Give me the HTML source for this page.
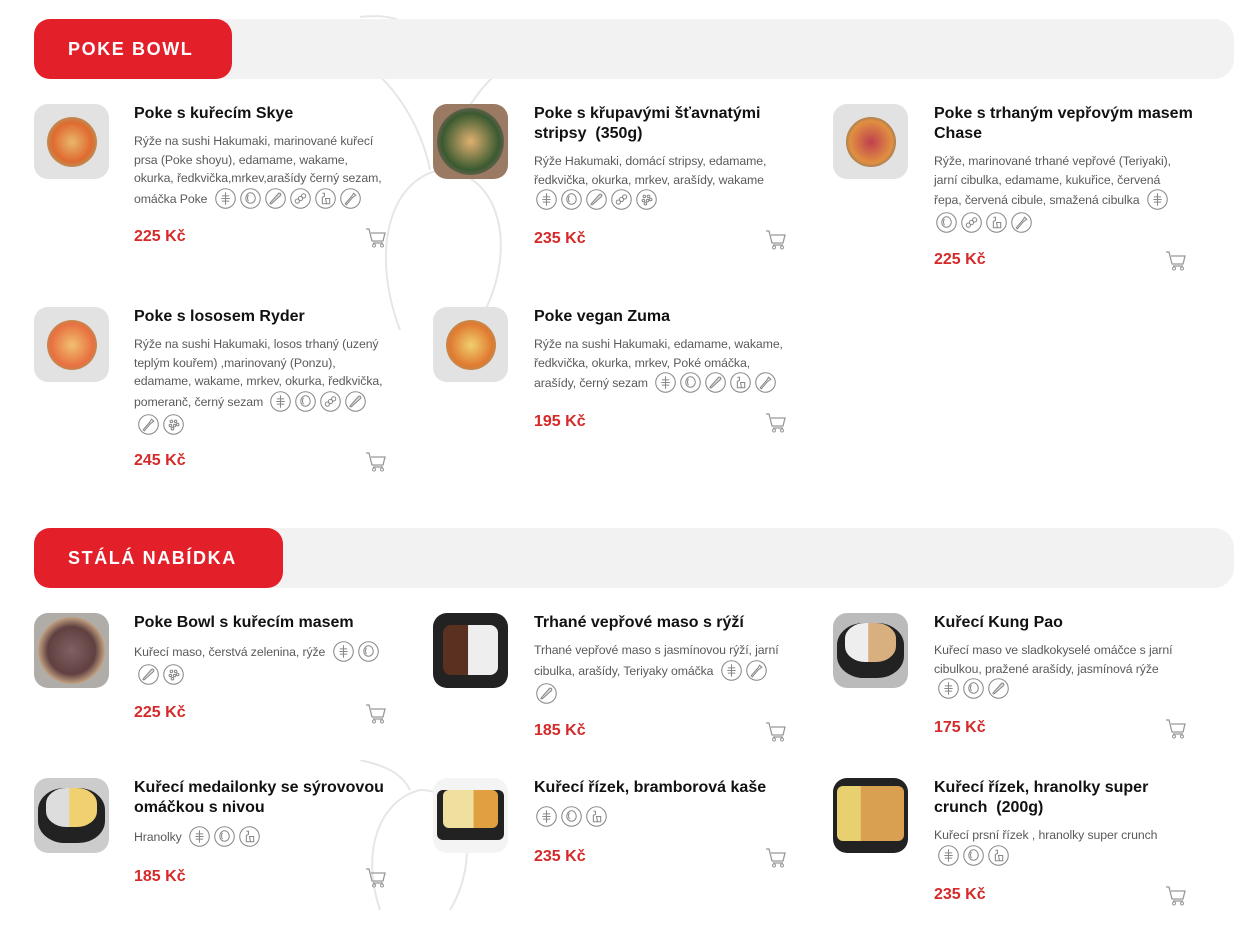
<!DOCTYPE html><html><head><meta charset="utf-8"><style>
body{margin:0;width:1259px;height:942px;background:#fff;font-family:"Liberation Sans",Arial,sans-serif;position:relative;overflow:hidden}
.bar{position:absolute;left:34px;width:1200px;height:60px;background:#f2f2f2;border-radius:20px}
.pill{position:absolute;left:0;top:0;height:60px;background:#e3202a;border-radius:16px;color:#fff;font-weight:bold;font-size:18px;letter-spacing:1.6px;line-height:60px;padding-left:34px;box-sizing:border-box}
.img{position:absolute;width:75px;height:75px;border-radius:14px;overflow:hidden;background:#e2e2e2}
.it{position:absolute;width:262px}
.t{font-weight:bold;font-size:16px;line-height:20px;color:#111;margin:0 0 8px;white-space:nowrap}
.d{font-size:12.3px;letter-spacing:-0.1px;line-height:18.5px;color:#5a5a5a;white-space:nowrap}
.i{display:inline-block;width:21px;height:21px;vertical-align:middle;margin:0 0 2px 4px}
.p{position:absolute;font-weight:bold;font-size:16px;color:#d42a2a}
.c{position:absolute;width:22px;height:20px}
</style></head><body>
<svg width="0" height="0" style="position:absolute"><defs>
<symbol id="cart" viewBox="0 0 22 20"><path d="M1 1h3l3 12h11l2-8H6M8 15h10" stroke="#999" stroke-width="1.3" fill="none"/><circle cx="9" cy="17.5" r="1.5" stroke="#999" fill="none"/><circle cx="17" cy="17.5" r="1.5" stroke="#999" fill="none"/></symbol>
<symbol id="a" viewBox="0 0 20 20"><circle cx="10" cy="10" r="9.3" stroke="#888" stroke-width="1" fill="none"/><path d="M10 4v12M6.5 7.5h7M6 10h8M6.5 12.5h7" stroke="#888" stroke-width="1" fill="none"/></symbol>
<symbol id="b" viewBox="0 0 20 20"><circle cx="10" cy="10" r="9.3" stroke="#888" stroke-width="1" fill="none"/><path d="M10 4.5c3 0 4.5 3 4.5 5.5s-2 4.5-4.5 4.5-4.5-2-4.5-4.5S7 4.5 10 4.5zM8 6.5c-1 1.5-1 4 0 6" stroke="#888" stroke-width="1" fill="none"/></symbol>
<symbol id="c" viewBox="0 0 20 20"><circle cx="10" cy="10" r="9.3" stroke="#888" stroke-width="1" fill="none"/><path d="M5 14l8-9c1.5-.5 2.5.5 2 2l-9 8c-1.5.5-1.5-.5-1-1z" stroke="#888" stroke-width="1" fill="#ddd"/></symbol>
<symbol id="e" viewBox="0 0 20 20"><circle cx="10" cy="10" r="9.3" stroke="#888" stroke-width="1" fill="none"/><circle cx="7" cy="12.5" r="2" stroke="#888" fill="none"/><circle cx="10" cy="10" r="2" stroke="#888" fill="none"/><circle cx="13" cy="7.5" r="2" stroke="#888" fill="none"/></symbol>
<symbol id="f" viewBox="0 0 20 20"><circle cx="10" cy="10" r="9.3" stroke="#888" stroke-width="1" fill="none"/><path d="M7 5h2v3l-2 1v6h4M10 10h4v5h-3z" stroke="#888" stroke-width="1" fill="none"/></symbol>
<symbol id="g" viewBox="0 0 20 20"><circle cx="10" cy="10" r="9.3" stroke="#888" stroke-width="1" fill="none"/><path d="M5 15l6-7 2-3 2 2-3 2-6 7z" stroke="#888" stroke-width="1" fill="none"/></symbol>
<symbol id="h" viewBox="0 0 20 20"><circle cx="10" cy="10" r="9.3" stroke="#888" stroke-width="1" fill="none"/><g fill="none" stroke="#888"><circle cx="8" cy="7" r="1.2"/><circle cx="12" cy="7" r="1.2"/><circle cx="7" cy="11" r="1.2"/><circle cx="11" cy="11" r="1.2"/><circle cx="14" cy="10" r="1.2"/><circle cx="9" cy="14" r="1.2"/></g></symbol>
</defs></svg>

<svg style="position:absolute;left:360px;top:0" width="180" height="340" opacity=".2"><path d="M40 330 C10 250 30 180 80 170 C140 170 160 250 120 320 M70 170 C60 120 30 80 0 60 M80 170 C100 110 130 70 160 60 M-20 20 C30 10 50 20 60 40" stroke="#888" stroke-width="2" fill="none"/></svg>
<svg style="position:absolute;left:360px;top:760px" width="120" height="160" opacity=".2"><path d="M20 150 C0 90 20 40 60 30 C110 30 120 100 90 150 M50 30 C40 10 20 5 0 0" stroke="#888" stroke-width="2" fill="none"/></svg>

<div class="bar" style="top:19px"><div class="pill" style="width:198px">POKE BOWL</div></div>
<div class="bar" style="top:528px"><div class="pill" style="width:249px">STÁLÁ NABÍDKA</div></div>

<div class="img" style="left:34px;top:104px"><div style="margin:13px;width:50px;height:50px;border-radius:50%;background:radial-gradient(#e8b86b,#e06a30 55%,#c08a50 70%)"></div></div>
<div class="img" style="left:433px;top:104px;background:#9a7a62"><div style="margin:4px;width:67px;height:67px;border-radius:50%;background:radial-gradient(#e0b070,#3a5a30 60%,#c07090)"></div></div>
<div class="img" style="left:833px;top:104px"><div style="margin:13px;width:50px;height:50px;border-radius:50%;background:radial-gradient(#c04050,#e09040 60%,#b08050 70%)"></div></div>
<div class="img" style="left:34px;top:307px"><div style="margin:13px;width:50px;height:50px;border-radius:50%;background:radial-gradient(#f0c070,#e87040 60%,#c08a50 72%)"></div></div>
<div class="img" style="left:433px;top:307px"><div style="margin:13px;width:50px;height:50px;border-radius:50%;background:radial-gradient(#f0d070,#e07a30 60%,#c08a50 72%)"></div></div>
<div class="img" style="left:34px;top:613px;background:#b0aca8"><div style="margin:4px;width:67px;height:67px;border-radius:50%;background:radial-gradient(#806060,#604040 50%,#c0a080 70%)"></div></div>
<div class="img" style="left:433px;top:613px;background:#222"><div style="margin:12px 10px;width:55px;height:50px;border-radius:8px;background:linear-gradient(90deg,#5a3020 45%,#eee 46%)"></div></div>
<div class="img" style="left:833px;top:613px;background:#bbb"><div style="margin:10px 4px;width:67px;height:55px;border-radius:40%;background:#222"><div style="margin:8px;width:51px;height:39px;border-radius:40%;background:linear-gradient(90deg,#eee 45%,#d8b080 46%)"></div></div></div>
<div class="img" style="left:34px;top:778px;background:#ccc"><div style="margin:10px 4px;width:67px;height:55px;border-radius:40%;background:#222"><div style="margin:8px;width:51px;height:39px;border-radius:40%;background:linear-gradient(90deg,#ddd 45%,#f0d070 46%)"></div></div></div>
<div class="img" style="left:433px;top:778px;background:#f4f4f4"><div style="margin:12px 4px;width:67px;height:50px;border-radius:6px;background:#222"><div style="margin:6px;width:55px;height:38px;border-radius:6px;background:linear-gradient(90deg,#f0e0a0 55%,#e0a040 56%)"></div></div></div>
<div class="img" style="left:833px;top:778px;background:#222"><div style="margin:8px 4px;width:67px;height:55px;border-radius:6px;background:linear-gradient(90deg,#e8d070 35%,#d8a050 36%)"></div></div>

<div class="it" style="left:134px;top:104px"><div class="t">Poke s kuřecím Skye</div><div class="d">Rýže na sushi Hakumaki, marinované kuřecí<br>prsa (Poke shoyu), edamame, wakame,<br>okurka, ředkvička,mrkev,arašídy černý sezam,<br>omáčka Poke <svg class="i"><use href="#a"/></svg><svg class="i"><use href="#b"/></svg><svg class="i"><use href="#c"/></svg><svg class="i"><use href="#e"/></svg><svg class="i"><use href="#f"/></svg><svg class="i"><use href="#g"/></svg></div></div>
<div class="it" style="left:534px;top:104px"><div class="t">Poke s křupavými šťavnatými<br>stripsy &nbsp;(350g)</div><div class="d">Rýže Hakumaki, domácí stripsy, edamame,<br>ředkvička, okurka, mrkev, arašídy, wakame<br><svg class="i" style="margin-left:2px"><use href="#a"/></svg><svg class="i"><use href="#b"/></svg><svg class="i"><use href="#c"/></svg><svg class="i"><use href="#e"/></svg><svg class="i"><use href="#h"/></svg></div></div>
<div class="it" style="left:934px;top:104px"><div class="t">Poke s trhaným vepřovým masem<br>Chase</div><div class="d">Rýže, marinované trhané vepřové (Teriyaki),<br>jarní cibulka, edamame, kukuřice, červená<br>řepa, červená cibule, smažená cibulka <svg class="i"><use href="#a"/></svg><br><svg class="i" style="margin-left:2px"><use href="#b"/></svg><svg class="i"><use href="#e"/></svg><svg class="i"><use href="#f"/></svg><svg class="i"><use href="#g"/></svg></div></div>
<div class="it" style="left:134px;top:307px"><div class="t">Poke s lososem Ryder</div><div class="d">Rýže na sushi Hakumaki, losos trhaný (uzený<br>teplým kouřem) ,marinovaný (Ponzu),<br>edamame, wakame, mrkev, okurka, ředkvička,<br>pomeranč, černý sezam <svg class="i"><use href="#a"/></svg><svg class="i"><use href="#b"/></svg><svg class="i"><use href="#e"/></svg><svg class="i"><use href="#c"/></svg><br><svg class="i" style="margin-left:4px"><use href="#g"/></svg><svg class="i"><use href="#h"/></svg></div></div>
<div class="it" style="left:534px;top:307px"><div class="t">Poke vegan Zuma</div><div class="d">Rýže na sushi Hakumaki, edamame, wakame,<br>ředkvička, okurka, mrkev, Poké omáčka,<br>arašídy, černý sezam <svg class="i"><use href="#a"/></svg><svg class="i"><use href="#b"/></svg><svg class="i"><use href="#c"/></svg><svg class="i"><use href="#f"/></svg><svg class="i"><use href="#g"/></svg></div></div>

<div class="it" style="left:134px;top:613px"><div class="t">Poke Bowl s kuřecím masem</div><div class="d">Kuřecí maso, čerstvá zelenina, rýže <svg class="i"><use href="#a"/></svg><svg class="i"><use href="#b"/></svg><br><svg class="i" style="margin-left:4px"><use href="#c"/></svg><svg class="i"><use href="#h"/></svg></div></div>
<div class="it" style="left:534px;top:613px"><div class="t">Trhané vepřové maso s rýží</div><div class="d">Trhané vepřové maso s jasmínovou rýží, jarní<br>cibulka, arašídy, Teriyaky omáčka <svg class="i"><use href="#a"/></svg><svg class="i"><use href="#g"/></svg><br><svg class="i" style="margin-left:2px"><use href="#c"/></svg></div></div>
<div class="it" style="left:934px;top:613px"><div class="t">Kuřecí Kung Pao</div><div class="d">Kuřecí maso ve sladkokyselé omáčce s jarní<br>cibulkou, pražené arašídy, jasmínová rýže<br><svg class="i" style="margin-left:4px"><use href="#a"/></svg><svg class="i"><use href="#b"/></svg><svg class="i"><use href="#c"/></svg></div></div>
<div class="it" style="left:134px;top:778px"><div class="t">Kuřecí medailonky se sýrovovou<br>omáčkou s nivou</div><div class="d">Hranolky <svg class="i"><use href="#a"/></svg><svg class="i"><use href="#b"/></svg><svg class="i"><use href="#f"/></svg></div></div>
<div class="it" style="left:534px;top:778px"><div class="t">Kuřecí řízek, bramborová kaše</div><div class="d"><svg class="i" style="margin-left:2px"><use href="#a"/></svg><svg class="i"><use href="#b"/></svg><svg class="i"><use href="#f"/></svg></div></div>
<div class="it" style="left:934px;top:778px"><div class="t">Kuřecí řízek, hranolky super<br>crunch &nbsp;(200g)</div><div class="d">Kuřecí prsní řízek , hranolky super crunch<br><svg class="i" style="margin-left:4px"><use href="#a"/></svg><svg class="i"><use href="#b"/></svg><svg class="i"><use href="#f"/></svg></div></div>

<div class="p" style="left:134px;top:228px">225 Kč</div>
<div class="p" style="left:534px;top:230px">235 Kč</div>
<div class="p" style="left:934px;top:251px">225 Kč</div>
<div class="p" style="left:134px;top:452px">245 Kč</div>
<div class="p" style="left:534px;top:413px">195 Kč</div>
<div class="p" style="left:134px;top:704px">225 Kč</div>
<div class="p" style="left:534px;top:722px">185 Kč</div>
<div class="p" style="left:934px;top:719px">175 Kč</div>
<div class="p" style="left:134px;top:868px">185 Kč</div>
<div class="p" style="left:534px;top:848px">235 Kč</div>
<div class="p" style="left:934px;top:886px">235 Kč</div>

<svg class="c" style="left:365px;top:228px"><use href="#cart"/></svg>
<svg class="c" style="left:765px;top:230px"><use href="#cart"/></svg>
<svg class="c" style="left:1165px;top:251px"><use href="#cart"/></svg>
<svg class="c" style="left:365px;top:452px"><use href="#cart"/></svg>
<svg class="c" style="left:765px;top:413px"><use href="#cart"/></svg>
<svg class="c" style="left:365px;top:704px"><use href="#cart"/></svg>
<svg class="c" style="left:765px;top:722px"><use href="#cart"/></svg>
<svg class="c" style="left:1165px;top:719px"><use href="#cart"/></svg>
<svg class="c" style="left:365px;top:868px"><use href="#cart"/></svg>
<svg class="c" style="left:765px;top:848px"><use href="#cart"/></svg>
<svg class="c" style="left:1165px;top:886px"><use href="#cart"/></svg>
</body></html>
